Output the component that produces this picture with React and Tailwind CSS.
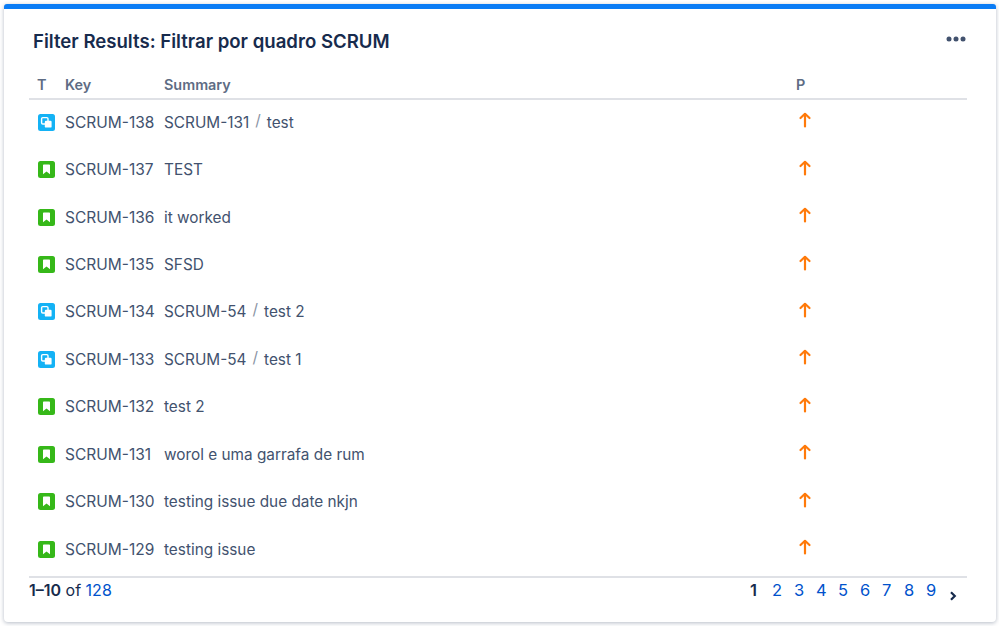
const rows = [
  { type: "subtask", key: "SCRUM-138", parent: "SCRUM-131", summary: "test" },
  { type: "story", key: "SCRUM-137", summary: "TEST" },
  { type: "story", key: "SCRUM-136", summary: "it worked" },
  { type: "story", key: "SCRUM-135", summary: "SFSD" },
  { type: "subtask", key: "SCRUM-134", parent: "SCRUM-54", summary: "test 2" },
  { type: "subtask", key: "SCRUM-133", parent: "SCRUM-54", summary: "test 1" },
  { type: "story", key: "SCRUM-132", summary: "test 2" },
  { type: "story", key: "SCRUM-131", summary: "worol e uma garrafa de rum" },
  { type: "story", key: "SCRUM-130", summary: "testing issue due date nkjn" },
  { type: "story", key: "SCRUM-129", summary: "testing issue" },
];

function TypeIcon({ type }) {
  if (type === "subtask") {
    return (
      <svg width="17" height="17" viewBox="0 0 17 17">
        <rect width="17" height="17" rx="2.5" fill="#14b2f5" />
        <rect x="3.6" y="3.6" width="6.4" height="6.4" rx="1.2" fill="none" stroke="#fff" strokeWidth="1.4" />
        <rect x="6.8" y="6.8" width="6.8" height="6.8" rx="1.2" fill="#fff" />
      </svg>
    );
  }
  return (
    <svg width="17" height="17" viewBox="0 0 17 17">
      <rect width="17" height="17" rx="2.5" fill="#36b819" />
      <path d="M5 4.6C5 4 5.4 3.6 6 3.6h5c.6 0 1 .4 1 1v8.6l-3.5-2.7L5 13.2z" fill="#fff" />
    </svg>
  );
}

function ArrowUp() {
  return (
    <svg width="14" height="16" viewBox="0 0 14 16" fill="none" stroke="#ff7a0a" strokeWidth="2.2" strokeLinecap="round" strokeLinejoin="round">
      <path d="M7 14.5V2" />
      <path d="M2.5 6 7 1.8 11.5 6" />
    </svg>
  );
}

export default function App() {
  return (
    <div className="h-[626px] w-[999px] bg-white p-1 font-['Inter',sans-serif] text-[#42526e]">

      {/* Card */}
      <div className="h-[618px] w-[992px] overflow-hidden rounded-b-[4px] rounded-t-[3px] border-t-[5px] border-[#0a7cf5] bg-white pl-[25px] pr-[29px] shadow-[0_1px_4px_rgba(9,30,66,0.3)]">

        {/* Title */}
        <div className="flex h-[56px] items-start justify-between pl-[4px] pr-[1px] pt-[20px]">
          <h2 className="text-[18.6px] font-semibold leading-[24px] text-[#172b4d]">Filter Results: Filtrar por quadro SCRUM</h2>
          <svg className="mt-[7px]" width="20" height="6" viewBox="0 0 20 6" fill="#42526e">
            <circle cx="3" cy="3" r="2.5" />
            <circle cx="10" cy="3" r="2.5" />
            <circle cx="17" cy="3" r="2.5" />
          </svg>
        </div>

        {/* Header */}
        <div className="flex h-[35px] items-end border-b-2 border-[#dfe1e6] pb-[3px] text-[14.4px] font-semibold leading-[20px] text-[#5e6c84]">
          <div className="w-[36px] pl-[8px]">T</div>
          <div className="w-[99px]">Key</div>
          <div className="w-[632px]">Summary</div>
          <div>P</div>
        </div>

        {/* Rows */}
        <div className="h-[478px] border-b-2 border-[#dfe1e6]">
          {rows.map((row) => (
            <div key={row.key} className="flex h-[47.45px] items-center pb-[2px] leading-[24px]">
              <div className="w-[36px] pb-[1px] pl-[9px]"><TypeIcon type={row.type} /></div>
              <div className="w-[99px] whitespace-nowrap text-[15.5px]">{row.key}</div>
              <div className="w-[632px] whitespace-nowrap text-[15.35px]">
                {row.parent && (
                  <>
                    {row.parent}
                    <span className="relative top-[-2px] mx-[6px] text-[#8993a4]">/</span>
                  </>
                )}
                {row.summary}
              </div>
              <div className="pb-[5px] pl-[2px]"><ArrowUp /></div>
            </div>
          ))}
        </div>

        {/* Footer */}
        <div className="flex items-start justify-between pr-[10px] text-[16px]">
          <div className="leading-[24px] text-[#172b4d]">
            <span className="font-semibold">1–10</span> of <span className="text-[#0052cc]">128</span>
          </div>
          <div className="flex items-start text-[16.5px] leading-[24px] text-[#0052cc]">
            <span className="w-[22px] font-semibold text-[#172b4d]">1</span>
            {[2, 3, 4, 5, 6, 7, 8, 9].map((n) => (
              <span key={n} className="w-[22px]">{n}</span>
            ))}
            <svg className="ml-[1px] mt-[13px]" width="8" height="10" viewBox="0 0 8 10" fill="none" stroke="#172b4d" strokeWidth="2.2">
              <path d="M2 1.2 5.8 5 2 8.8" />
            </svg>
          </div>
        </div>

      </div>

    </div>
  );
}
